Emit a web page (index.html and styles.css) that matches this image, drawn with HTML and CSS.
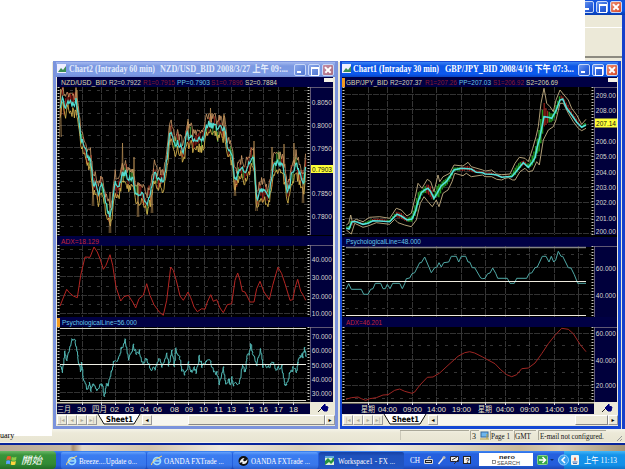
FILE: index.html
```html
<!DOCTYPE html>
<html lang="zh-Hant">
<head>
<meta charset="utf-8">
<title>Workspace1</title>
<link rel="stylesheet" href="styles.css">
</head>
<body>
<div class="app">
  <div class="app-top">
    <div class="cover"></div>
    <div class="app-edge">
      <div class="app-title"><i class="btn min"></i><i class="btn max"></i><i class="btn close"></i></div>
      <div class="app-menu"></div>
      <div class="app-tools"></div>
    </div>
  </div>
  <div class="workspace"></div>
  <div class="status">
    <span class="status-left">uary</span>
    <svg width="225" height="13" viewBox="400 429 225 13" class="status-cells">
      <path d="M400 430.500H469M400 430V440M470.500 440V430.500H479M490.500 440V430.500H513M514.500 440V430.500H536M538.500 440V430.500H606" fill="none" stroke="#aaa899"/>
      <rect x="481" y="432" width="7" height="5" fill="#6cb5ed" stroke="#356a9d"/><path d="M480 439h9M487 434v5" stroke="#b8a040"/>
      <text x="472" y="439" textLength="4">3</text><text x="491" y="439" textLength="19">Page 1</text><text x="515" y="439" textLength="16">GMT</text><text x="540" y="439" textLength="64">E-mail not configured.</text>
      <path d="M617 441l5-5M620 441l2-2" stroke="#999"/>
    </svg>
  </div>
  <div class="rule"></div>
  <div class="desktop"></div>
  <div class="taskbar">
    <div class="start">
      <svg width="11" height="11" viewBox="0 0 11 11"><path d="M1 1.500Q3 .5 5 1.500L4.500 5Q2.500 4 .3 5Z" fill="#ee5a2b"/><path d="M5.800 2Q8 3 10.500 1.800L10 5.300Q7.500 6.300 5.300 5.300Z" fill="#8ccd45"/><path d="M.3 5.800Q2.300 4.900 4.300 5.800L3.800 9.300Q2 8.300 0 9.300Z" fill="#59a0ff"/><path d="M5.200 6Q7.500 7 9.900 6L9.300 9.500Q7 10.500 4.700 9.500Z" fill="#ffd53f"/></svg>
      <span>開始</span>
    </div>
    <div class="task"><svg width="86" height="17"><g class="ie"><circle cx="11" cy="9" r="3.500"/><path d="M8 9h6"/></g><path d="M5.500 13Q5 9 16 4" stroke="#ffd76b" fill="none"/><text x="18" y="12" textLength="58">Breeze....Update o...</text></svg></div>
    <div class="task"><svg width="86" height="17"><g class="ie"><circle cx="10" cy="9" r="3.500"/><path d="M7 9h6"/></g><path d="M4.500 13Q4 9 15 4" stroke="#ffd76b" fill="none"/><text x="17" y="12" textLength="60">OANDA FXTrade ...</text></svg></div>
    <div class="task"><svg width="86" height="17"><circle cx="10.500" cy="9" r="5" fill="#111"/><path d="M6.500 11Q7.500 6 11.500 6Q9.500 8 10.500 9Q12.500 10 14.500 7Q14.500 12 10.500 12Q8.500 12 9.500 10Z" fill="#eee"/><text x="18" y="12" textLength="59">OANDA FXTrade ...</text></svg></div>
    <div class="task active"><svg width="86" height="17"><rect x="6" y="4" width="9" height="9" fill="#dff0d8"/><path d="M6 9l3-3 3 3 3-5v5l-3 3-2-2-4 3z" fill="#259343"/><path d="M6 4h9v2H6z" fill="#60a9df"/><text x="19" y="12" textLength="57">Workspace1 - FX ...</text></svg></div>
    <svg class="lang" width="159" height="18" viewBox="405 451 159 18">
      <text x="410" y="463" textLength="10">CH</text>
      <path d="M424.500 459.500h8v4h-8zM428 459v-2h3M426 461.500h5" fill="#222" stroke="#ddd"/>
      <path d="M438.500 464l5-6" stroke="#eee" stroke-width="1.500"/><circle cx="444" cy="457.500" r="1.500" fill="#bbb"/>
      <path d="M450.500 456.500h8v5h-8z" fill="#eee" stroke="#223"/><path d="M452 460l5-3M454 464l4-4" stroke="#333"/>
      <rect x="463.500" y="456.500" width="7" height="7" fill="#eee" stroke="#222"/><text x="465.500" y="463" class="q">?</text>
      <rect x="479" y="453" width="54" height="13" fill="#fff"/>
      <text x="499" y="458.500" textLength="16" class="nero">nero</text><text x="497" y="464.500" textLength="23" class="search">SEARCH</text>
      <rect x="492.500" y="460.500" width="3" height="3" fill="none" stroke="#666" stroke-width=".7"/>
      <rect x="537.500" y="455.500" width="10" height="9" rx="1" fill="#37a84a" stroke="#85d28b"/><path d="M539 460h6M542.500 457l3 3-3 3" stroke="#fff" stroke-width="1.500" fill="none"/>
      <path d="M550 459h4l-2 2z" fill="#0b2b70"/>
    </svg>
    <div class="tray"><svg width="61" height="18" viewBox="564 451 61 18">
      <circle cx="563.500" cy="460" r="5" fill="#3aa0ef" stroke="#8fd0ff"/><path d="M565 457l-3 3 3 3" stroke="#fff" stroke-width="1.500" fill="none"/>
      <rect x="571" y="455" width="8" height="10" rx="1" fill="#f2f2ee"/><path d="M575 457q-2 2 0 4q2-2 0-4" fill="#e06030"/><path d="M572.500 462h5M573 463.500h4" stroke="#487abe"/>
      <text x="584" y="463" textLength="33">上午 11:13</text></svg></div>
  </div>

  <section class="win inactive" id="w2">
    <header><svg class="ttl" width="236" height="15" viewBox="56 62 236 15"><rect x="57" y="64" width="9" height="9" fill="#eef"/><path d="M58 72l3-4 2 2 3-4v6z" fill="#3b8d54"/><text x="69" y="72" textLength="86">Chart2 (Intraday 60 min)</text><text x="160" y="72" textLength="128">NZD/USD_BID 2008/3/27 上午 09:...</text></svg>
      <i class="btn min"></i><i class="btn max"></i><i class="btn close"></i></header>
    <svg class="chart" id="c2" width="276" height="337" viewBox="57 77 276 337"></svg>
    <footer class="tabs"><i class="nav">|◂</i><i class="nav">◂</i><i class="nav">▸</i><i class="nav">▸|</i>
      <svg width="45" height="11"><path d="M1 0l6 10h30l6-10" fill="#fff" stroke="#111"/><text x="9" y="8" textLength="27">Sheet1</text></svg>
      <i class="nav on">◂</i><span class="track"><b class="thumb wide"></b></span><i class="nav on">▸</i></footer>
  </section>

  <section class="win" id="w1">
    <header><svg class="ttl" width="234" height="15" viewBox="342 62 234 15"><rect x="342" y="64" width="9" height="9" fill="#eef"/><path d="M343 72l3-4 2 2 3-4v6z" fill="#3b8d54"/><text x="353" y="72" textLength="86">Chart1 (Intraday 30 min)</text><text x="445" y="72" textLength="129">GBP/JPY_BID 2008/4/16 下午 07:3...</text></svg>
      <i class="btn min"></i><i class="btn max"></i><i class="btn close"></i></header>
    <svg class="chart" id="c1" width="275" height="337" viewBox="342 77 275 337"></svg>
    <footer class="tabs"><i class="nav">|◂</i><i class="nav">◂</i><i class="nav">▸</i><i class="nav">▸|</i>
      <svg width="45" height="11"><path d="M1 0l6 10h30l6-10" fill="#fff" stroke="#111"/><text x="9" y="8" textLength="27">Sheet1</text></svg>
      <i class="nav on">◂</i><span class="track"><b class="thumb"></b></span><i class="nav on">▸</i></footer>
  </section>
</div>
<script src="charts.js"></script>
</body>
</html>
```
FILE: styles.css
```css
* { box-sizing: border-box; }
body { margin: 0; overflow: hidden; background: #fff; }
svg { display: block; flex: none; }
i { font-style: normal; }
.app { position: relative; display: flex; flex-direction: column; width: 625px; height: 469px; }
.app-top { display: flex; height: 62px; }
.cover { flex: none; width: 585px; background: #fff; }
.app-edge { flex: none; width: 40px; border-right: 3px solid #1740ca; background: #ece9d8; }
.app-title { display: flex; justify-content: flex-end; gap: 2px; height: 15px; margin-right: -3px; padding: 0 3px 0 0; background: linear-gradient(#1453dc, #0a50e3 70%, #073cae); overflow: hidden; }
.app-menu { height: 13px; border-bottom: 1px solid #fff; }
.app-tools { height: 30px; border-bottom: 2px solid #8c8a80; }
.workspace { flex: none; height: 367px; margin-left: 52px; background: #ece9d8; border-right: 3px solid #1740ca; }
.status { display: flex; justify-content: space-between; height: 13px; background: linear-gradient(#f5f3e8, #ece9d8 4px, #e8e5d2); position: relative; }
.status-left { width: 52px; height: 7px; background: #fff; font: 8px "Liberation Serif", serif; line-height: 13px; white-space: nowrap; }
.status-cells text { font: 8px "Liberation Serif", serif; fill: #111; }
.rule { height: 3px; background: #07249b; border-top: 1px solid #f5f3e8; }
.desktop { height: 6px; background: linear-gradient(90deg, #b9aa96, #c6b9a5 70px, #a98e6f 73px, #e1d8c9 82px, #d2c4ae 150px, #eee9df 220px, #d9d0bd 300px, #eeeae0 380px, #ded7c8 450px, #c9b99a 520px, #d8cdb7 560px, #a69578); }
.taskbar { display: flex; height: 18px; background: linear-gradient(#3d87f3, #2560df 3px, #245edb 14px, #1c48b5); }
.start { display: flex; align-items: center; gap: 4px; width: 56px; padding-left: 6px; margin-right: 5px; border-radius: 0 4px 4px 0; background: linear-gradient(#69b867, #3a943a 4px, #318a34 13px, #216c26); color: #fff; font: italic 10.500px "Noto Sans CJK TC", sans-serif; line-height: 16px; }
.task { width: 85px; height: 17px; margin: 1px 1px 0 0; border-radius: 2px; background: linear-gradient(#66a2fb, #3b7df1 3px, #3877eb 13px, #2b60cc); overflow: hidden; }
.task.active { background: linear-gradient(#1641a5, #1f52bd 4px, #2055c4); }
.task text, .lang text, .tray text { font: 8.5px "Liberation Serif", "Noto Sans CJK TC", serif; fill: #fff; }
.ie { fill: none; stroke: #9adcff; stroke-width: 1.700; }
.lang .q { font: bold 7px "Liberation Sans", sans-serif; fill: #111; }
.lang .nero { font: bold 6px "Liberation Sans", sans-serif; fill: #222; }
.lang .search { font: 4.500px "Liberation Sans", sans-serif; fill: #444; }
.tray { flex: 1; background: linear-gradient(#44b7f8, #1592ea 4px, #1290e8 14px, #0f72c6); }
.tray svg { overflow: visible; }

.win { position: absolute; top: 61px; left: 340px; width: 281px; height: 368px; border: solid #1447d4; border-width: 1px 3px 3px 2px; background: #ece9d8; }
.win.inactive { left: 53px; width: 285px; border-color: #7b93dc; border-width: 1px 3px 3px 3px; }
.win header { display: flex; align-items: center; gap: 2px; height: 15px; background: linear-gradient(#3b83f4, #0c55e5 4px, #0c59ee 12px, #0844c4); }
.win.inactive header { background: linear-gradient(#a5b9ef, #7b98e1 4px, #7c9be5 12px, #718bd5); }
.ttl { overflow: hidden; }
.ttl text { font: bold 9.500px "Liberation Serif", "Noto Sans CJK TC", serif; fill: #fff; }
.win.inactive .ttl text { fill: #e4ecfb; }
.btn { position: relative; flex: none; width: 12px; height: 12px; border: 1px solid #c8d8f8; border-radius: 2px; background: linear-gradient(135deg, #6d98ef, #2c62dc 60%, #244fc0); }
.inactive .btn { background: linear-gradient(135deg, #8ba8eb, #5077d2); }
.btn.close { background: linear-gradient(135deg, #ee8e70, #d6492a); }
.inactive .btn.close { background: linear-gradient(135deg, #c58ba2, #aa6c80); }
.btn.min::after { content: ""; position: absolute; left: 2px; bottom: 2px; width: 4px; height: 2px; background: #fff; }
.btn.max::after { content: ""; position: absolute; left: 2px; top: 2px; width: 6px; height: 6px; border: 1px solid #fff; border-top-width: 2px; }
.btn.close::before, .btn.close::after { content: ""; position: absolute; left: 1px; top: 4px; width: 8px; height: 1.500px; background: #fff; transform: rotate(45deg); }
.btn.close::after { transform: rotate(-45deg); }
.app-title .btn { margin-top: 1px; }
.chart { margin-left: 1px; }
.win:not(.inactive) .chart { margin-left: 0; }
.chart text { font: 8px "Liberation Sans", "Noto Sans CJK TC", sans-serif; fill: #d6d6d0; }
.chart text.price { fill: #111; }
.tabs { display: flex; align-items: center; height: 11px; margin-left: 1px; background: #ece9d8; }
.nav { width: 10px; height: 10px; border: 1px solid #fff; border-right-color: #999; border-bottom-color: #999; background: #ece9d8; color: #aaa899; font: 6px "DejaVu Sans", sans-serif; line-height: 8px; text-align: center; flex: none; overflow: hidden; }
.nav.on { color: #000; }
.tabs text { font: bold 8px "DejaVu Sans", sans-serif; fill: #000; }
.track { flex: 1; display: flex; justify-content: flex-end; height: 10px; background: #f7f6ef; }
.thumb { width: 33px; background: #ece9d8; border: 1px solid #fff; border-right-color: #888; border-bottom-color: #888; }
.thumb.wide { width: 137px; }
```
FILE: charts.js
```js
const NS = 'http://www.w3.org/2000/svg';
let svg;
function el(name, attrs, text) {
  const e = document.createElementNS(NS, name);
  for (const k in attrs) e.setAttribute(k, attrs[k]);
  if (text) e.textContent = text;
  svg.appendChild(e);
  return e;
}
const rect = (x, y, w, h, fill) => el('rect', { x, y, width: w, height: h, fill });
const path = (d, stroke, width = 1, extra = {}) => el('path', { d, stroke, 'stroke-width': width, fill: 'none', ...extra });
function label(x, y, w, s, fill, cls) {
  const a = { x, y, textLength: w };
  if (fill) a.style = 'fill:' + fill;
  if (cls) a.class = cls;
  el('text', a, s);
}
// Series are stored in third-of-a-pixel units relative to an origin.
const pts = (ox, oy, s) => s.trim().split(/\s+/).map(p => p.split(',').map(Number)).map(([x, y]) => [ox + x / 3, oy + y / 3]);
const line = p => 'M' + p.map(q => q[0].toFixed(1) + ' ' + q[1].toFixed(1)).join('L');
function at(p, x) {
  for (let i = 1; i < p.length; i++) if (x <= p[i][0]) {
    const a = p[i - 1], b = p[i];
    return a[1] + (b[1] - a[1]) * (x - a[0]) / (b[0] - a[0]);
  }
  return p[p.length - 1][1];
}
let seed = 17;
const rnd = () => (seed = (seed * 16807) % 2147483647) / 2147483647;

function frame(x0, x1, axis, right, panels, cols, times) {
  rect(x0, 77, right - x0, 337, '#000');
  for (const p of panels) {
    rect(x0, p.head, right - x0, 10, '#000044');
    rect(axis, p.top, right - axis, p.bottom - p.top, '#00003c');
    path(`M${axis} ${p.top + .5}H${right}M${axis + .5} ${p.top}V${p.bottom}`, '#8a808c', .7);
    cols.forEach(x => path(`M${x + .5} ${p.top}V${p.bottom}`, '#353535', 1, { 'stroke-dasharray': '6 1' }));
    p.rows.forEach(y => path(`M${x0 + 3} ${y + .5}H${x1}`, '#323232', 1, { 'stroke-dasharray': '6 1' }));
    (p.minor || []).forEach(y => path(`M${x0 + 4} ${y + .5}H${x1}`, '#363636', 1, { 'stroke-dasharray': '3 6' }));
    path(`M${x0 + 1.5} ${p.top}V${p.bottom}M${x1 - .5} ${p.top}V${p.bottom}`, '#c8c8c0', 2, { 'stroke-dasharray': '1 2' });
    p.labels.forEach(([y, s]) => label(axis + 1.8, y + 3, 20, s));
  }
  rect(x0, 402, axis - x0, 1.500, '#cfcab4');
  rect(x0, 404, axis - x0, 10, '#00003c');
  cols.forEach(x => path(`M${x + .5} 402V405`, '#ddd'));
  rect(axis, 402, right - axis, 12, '#ece9d8');
  path(`M${axis + 8} 412L${axis + 13} 407`, '#222');
  path(`M${axis + 11} 408l4-4v2l3 1-1 4-3 0z`, '#000078', 1).setAttribute('fill', '#000078');
  times.forEach(([x, w, s]) => label(x, 412, w, s, '#e8e5cc'));
  rect(right - 9, 78, 9, 4, '#f5f3e8');
}

svg = document.getElementById('c2');
frame(57, 309, 310, 333, [
  { head: 77, top: 87, bottom: 235, rows: [101, 125, 147, 170, 192, 215], minor: [90, 113, 135, 158, 181, 204, 226],
    labels: [[101.500, '0.8050'], [125, '0.8000'], [147.500, '0.7950'], [193, '0.7850'], [215.500, '0.7800']] },
  { head: 236, top: 245, bottom: 317, rows: [258, 276, 295, 313], minor: [249, 267, 286, 304],
    labels: [[258.500, '40.000'], [277, '30.000'], [295.500, '20.000'], [312.500, '10.000']] },
  { head: 317, top: 327, bottom: 402, rows: [335, 349, 378, 392], labels: [[335.500, '70.000'], [349.500, '60.000'], [364.500, '50.000'], [378.500, '40.000'], [392.500, '30.000']] }
], [82, 101, 115, 129, 144, 157, 174, 188, 204, 218, 231, 249, 263, 278, 293],
[[57, 14, '三月'], [77, 9, '30'], [92, 15, '四月'], [110, 9, '02'], [125, 9, '03'], [140, 9, '04'], [153, 9, '06'], [170, 9, '08'], [185, 8, '09'], [199, 9, '10'], [214, 9, '11'], [227, 9, '13'], [245, 9, '15'], [259, 9, '16'], [274, 9, '17'], [289, 9, '18']]);
label(61, 85, 46, 'NZD/USD_BID', '#dcd8a8');
label(109, 85, 32, 'R2=0.7922', '#d8d4ba');
label(143, 85, 32, 'R1=0.7915', '#8a1a30');
label(177, 85, 33, 'PP=0.7903', '#6cc8ea');
label(211, 85, 32, 'S1=0.7896', '#8a1a30');
label(245, 85, 32, 'S2=0.7884', '#dcd8a8');
label(61, 243.500, 38, 'ADX=18.129', '#c02438');
label(62, 325, 75, 'PsychologicalLine=56.000', '#68c8e8');
rect(57, 318, 3, 9, '#f29b22');
rect(311, 165, 22, 8, '#ffff38');
label(312, 172, 20, '0.7903', null, 'price');

const nzd = pts(50, 60, '30,150 36,118 45,140 60,130 78,125 86,180 92,245 105,255 112,300 120,290 132,375 145,390 158,385 170,440 180,460 190,400 195,370 205,385 215,350 228,335 240,360 252,365 262,420 272,395 290,430 300,410 312,345 325,350 340,350 350,300 360,225 375,245 390,265 400,270 412,215 425,240 435,255')
  .concat(pts(190, 60, '20,250 40,230 50,200 62,190 75,200 90,215 103,200 112,270 125,285 135,365 155,320 165,350 178,310 190,300 200,410 215,385 235,400 250,320 265,310 280,320 292,385 305,340 320,310 330,340 340,375 347,320'));
const spikes = [[60.500, 89, 137], [77, 90, 115], [93, 180, 206], [110, 192, 233], [122.500, 143, 182], [134, 157, 187], [138, 182, 217], [152, 190, 213], [170, 126, 145], [188, 119, 140], [210.500, 108, 128], [224, 114, 135], [235, 180, 196], [254, 141, 170], [256.500, 190, 211], [272, 147, 170], [284, 144, 168], [294, 143, 166], [303, 178, 203]];
const up = [], down = [], mid = [], body = [];
let drift = 0;
for (let x = 60; x < 306; x += .8) {
  drift = drift * .55 + (rnd() - .5) * 7;
  const y = at(nzd, x);
  up.push([x, y + drift - 4.5 - rnd() * 8]);
  down.push([x, y + drift + 4.5 + rnd() * 8]);
  mid.push([x, y + drift * .9 + (rnd() - .5) * 4]);
  body.push([x, y + drift + (rnd() - .5) * 13]);
}
body.forEach(([x, y], i) => { if (i % 2) path(`M${x} ${y - 5}V${y + 5}`, rnd() > .25 ? '#8c1c16' : '#3f9430', 1.1); });
path(line(up), '#cf9c68', .8);
path(line(down), '#dcb84e', .85);
spikes.forEach(([x, a, b]) => path(`M${x - .8} ${b}L${x} ${a}L${x + .8} ${b}`, '#cfa05e', .6));
path(line(mid), '#52dccf', 1.25);

path(line(pts(50, 232, '30,222 50,172 58,182 70,192 82,197 92,130 105,75 120,76 132,45 142,60 150,80 160,112 168,100 180,68 188,100 198,165 212,207 222,194 235,190 248,210 257,228 267,200 280,190 290,155 300,190 312,218 328,240 340,250 350,205 362,105 370,115 380,150 390,192 400,205 414,180 422,197')
  .concat(pts(190, 232, '5,205 12,225 22,239 35,230 45,232 52,210 62,188 70,208 80,203 90,228 100,242 112,218 125,215 135,145 143,123 150,145 157,178 165,180 180,210 192,210 200,170 210,148 222,180 238,203 248,160 258,125 264,106 275,125 285,155 300,205 308,203 316,165 323,142 332,178 340,190 347,205'))), '#b52623');

// Oscillator moves in steps with a short ripple.
const psy = pts(50, 232, '30,400 37,420 44,358 50,385 65,320 75,330 83,375 91,420 94,390 98,435 110,470 118,450 122,475 130,455 140,475 155,455 162,490 168,455 175,460 183,420 190,390 205,380 213,350 225,320 235,385 250,340 258,365 268,360 278,395 290,380 298,405 315,415 325,380 335,405 350,365 355,400 365,360 372,400 377,350 388,380 395,415 403,425 415,395 422,420')
  .concat(pts(190, 232, '5,420 12,405 18,425 27,375 35,405 48,390 62,390 70,420 80,425 87,457 100,410 107,455 115,445 120,455 125,440 130,457 147,455 158,400 165,420 170,375 177,370 181,335 187,365 200,400 211,350 218,400 235,405 245,390 250,395 257,415 265,405 275,405 283,455 289,455 298,425 305,420 308,405 318,420 323,395 330,370 338,370 343,350 347,370'));
const step = [];
psy.forEach(([x, y], i) => {
  if (i) {
    const a = psy[i - 1];
    for (let t = .33; t < 1; t += .33) {
      const xx = a[0] + (x - a[0]) * t, yy = a[1] + (y - a[1]) * t + (rnd() - .5) * 5;
      step.push([xx, yy], [xx + .7, yy]);
    }
  }
  step.push([x, y]);
});
path(line(step), '#52b8b4', 1);
path('M60 328.500H306M60 400.500H306', '#d8d8cf');
path('M60 364.500H306', '#f0f0e6');

svg = document.getElementById('c1');
frame(342, 593, 594, 617, [
  { head: 77, top: 87, bottom: 235, rows: [94, 109, 124, 140, 155, 171, 187, 202, 218, 233],
    labels: [[94.500, '209.00'], [109.500, '208.00'], [140.500, '206.00'], [156, '205.00'], [171.500, '204.00'], [187, '203.00'], [202, '202.00'], [218, '201.00'], [231, '200.00']] },
  { head: 237, top: 246, bottom: 317, rows: [267, 294], minor: [254, 308], labels: [[268, '60.000'], [294.500, '40.000']] },
  { head: 317, top: 327, bottom: 402, rows: [333, 359, 385], minor: [345, 372, 398], labels: [[333, '60.000'], [359.500, '40.000'], [385, '20.000']] }
], [368, 387, 412, 436, 461, 485, 505, 529, 554, 578],
[[361, 14, '星期'], [378, 19, '04:00'], [403, 19, '09:00'], [427, 19, '14:00'], [452, 19, '19:00'], [478, 14, '星期'], [496, 18, '04:00'], [520, 19, '09:00'], [545, 19, '14:00'], [569, 19, '19:00']]);
rect(342, 78, 3, 9, '#f29b22');
label(346, 85, 42, 'GBP/JPY_BID', '#dcd8a8');
label(390, 85, 32, 'R2=207.37', '#d8d4ba');
label(425, 85, 32, 'R1=207.26', '#8a1a30');
label(459, 85, 32, 'PP=207.03', '#6cc8ea');
label(493, 85, 31, 'S1=206.92', '#8a1a30');
label(526, 85, 32, 'S2=206.69', '#dcd8a8');
label(346, 244, 75, 'PsychologicalLine=48.000', '#68c8e8');
label(346, 325, 36, 'ADX=46.201', '#c02438');
rect(595, 118.500, 22, 9, '#ffff38');
label(596, 126, 20, '207.14', null, 'price');

const avg = pts(338, 60, '25,505 33,507 42,485 55,485 75,493 90,490 105,482 125,483 155,485 165,475 177,463 190,468 207,480 222,477 232,455 240,425 250,398 260,390 270,385 278,395 288,415 297,400 310,377 325,365 335,350 348,330 370,325 400,327 415,337 434,338')
  .concat(pts(480, 60, '15,342 35,343 50,345 65,352 80,350 95,350 108,335 130,308 145,322 158,305 165,293 172,260 180,230 192,170 205,172 215,175 228,152 240,120 248,117 260,145 275,165 290,187 305,202 318,195'));
const high = pts(338, 60, '25,495 32,490 38,465 43,485 55,478 75,485 95,472 125,470 155,475 175,445 190,450 207,468 220,460 232,410 240,370 252,385 268,358 278,365 288,395 300,345 305,365 315,350 335,340 348,315 375,318 390,307 400,320 434,330')
  .concat(pts(480, 60, '15,333 35,330 50,342 65,344 90,342 105,310 118,292 135,295 145,305 158,265 168,230 175,200 183,130 192,85 200,130 210,140 220,155 228,120 240,90 252,105 265,120 275,145 290,165 305,193 318,178'));
const low = pts(338, 60, '25,510 40,522 50,490 75,502 90,498 115,488 155,493 170,478 180,488 200,495 220,500 235,480 247,430 258,410 270,425 283,440 295,420 303,440 315,400 330,390 342,365 350,340 375,347 385,340 400,350 434,345')
  .concat(pts(480, 60, '15,350 35,350 50,358 65,360 75,355 85,353 98,360 105,360 120,335 135,325 145,335 158,332 170,305 178,315 190,240 205,210 220,200 228,180 240,130 250,130 265,160 280,185 295,205 305,212 318,205'));
for (let x = 347; x < 586; x += 1.700) {
  const a = at(high, x) + 2, b = at(low, x) - 2, m = at(avg, x), rising = at(avg, x + 3) < m - .4;
  path(`M${x} ${(a + m) / 2 - 1}V${(b + m) / 2}`, rising ? '#239622' : '#9a211b', rising ? 1.5 : 1.2);
}
path(line(high), '#c4b084', .9);
path(line(low), '#c4b084', .9);
path(line(avg), '#52e2dc', 1.6);
path(line(pts(338, 232, '24,172 32,155 40,172 70,172 77,187 90,187 98,172 105,170 112,154 128,154 135,170 142,170 148,157 156,170 164,154 185,154 193,170 200,155 205,140 215,138 222,125 230,122 245,92 250,92 260,75 280,122 290,107 297,105 303,92 310,105 317,92 332,90 340,73 355,73 362,90 370,73 383,73 390,90 395,90 403,107 410,107 428,138 434,140')
  .concat(pts(480, 232, '15,139 23,125 30,123 38,108 47,124 53,139 82,139 90,154 103,154 110,139 140,139 148,124 155,123 165,107 172,105 187,73 198,73 207,90 214,73 221,90 227,84 235,58 243,73 248,73 265,107 273,108 283,128 293,154 318,154'))), '#50aaa7');
path('M346 247.500H586', '#858585', 1.500);
path('M346 281.500H586M346 315.500H586', '#eeeade');
path(line(pts(338, 232, '24,502 40,497 60,495 70,500 83,505 95,500 115,497 135,489 150,488 170,475 185,471 200,478 222,484 230,480 245,460 268,436 285,435 305,423 330,400 360,373 380,362 395,359 410,363 434,375')
  .concat(pts(480, 232, '20,382 45,395 62,413 80,428 95,434 110,428 125,410 145,408 165,393 185,365 205,335 225,310 245,289 265,292 280,305 300,337 318,359'))), '#9f2623');

// Condense or widen each label so that it fills its slot exactly.
document.querySelectorAll('text[textLength]').forEach(t => {
  const w = +t.getAttribute('textLength'), x = t.getAttribute('x'), y = t.getAttribute('y');
  t.removeAttribute('textLength');
  const scale = w / t.getComputedTextLength();
  t.setAttribute('x', 0);
  t.setAttribute('y', 0);
  t.setAttribute('transform', `translate(${x} ${y}) scale(${scale.toFixed(4)} 1)`);
});
```
